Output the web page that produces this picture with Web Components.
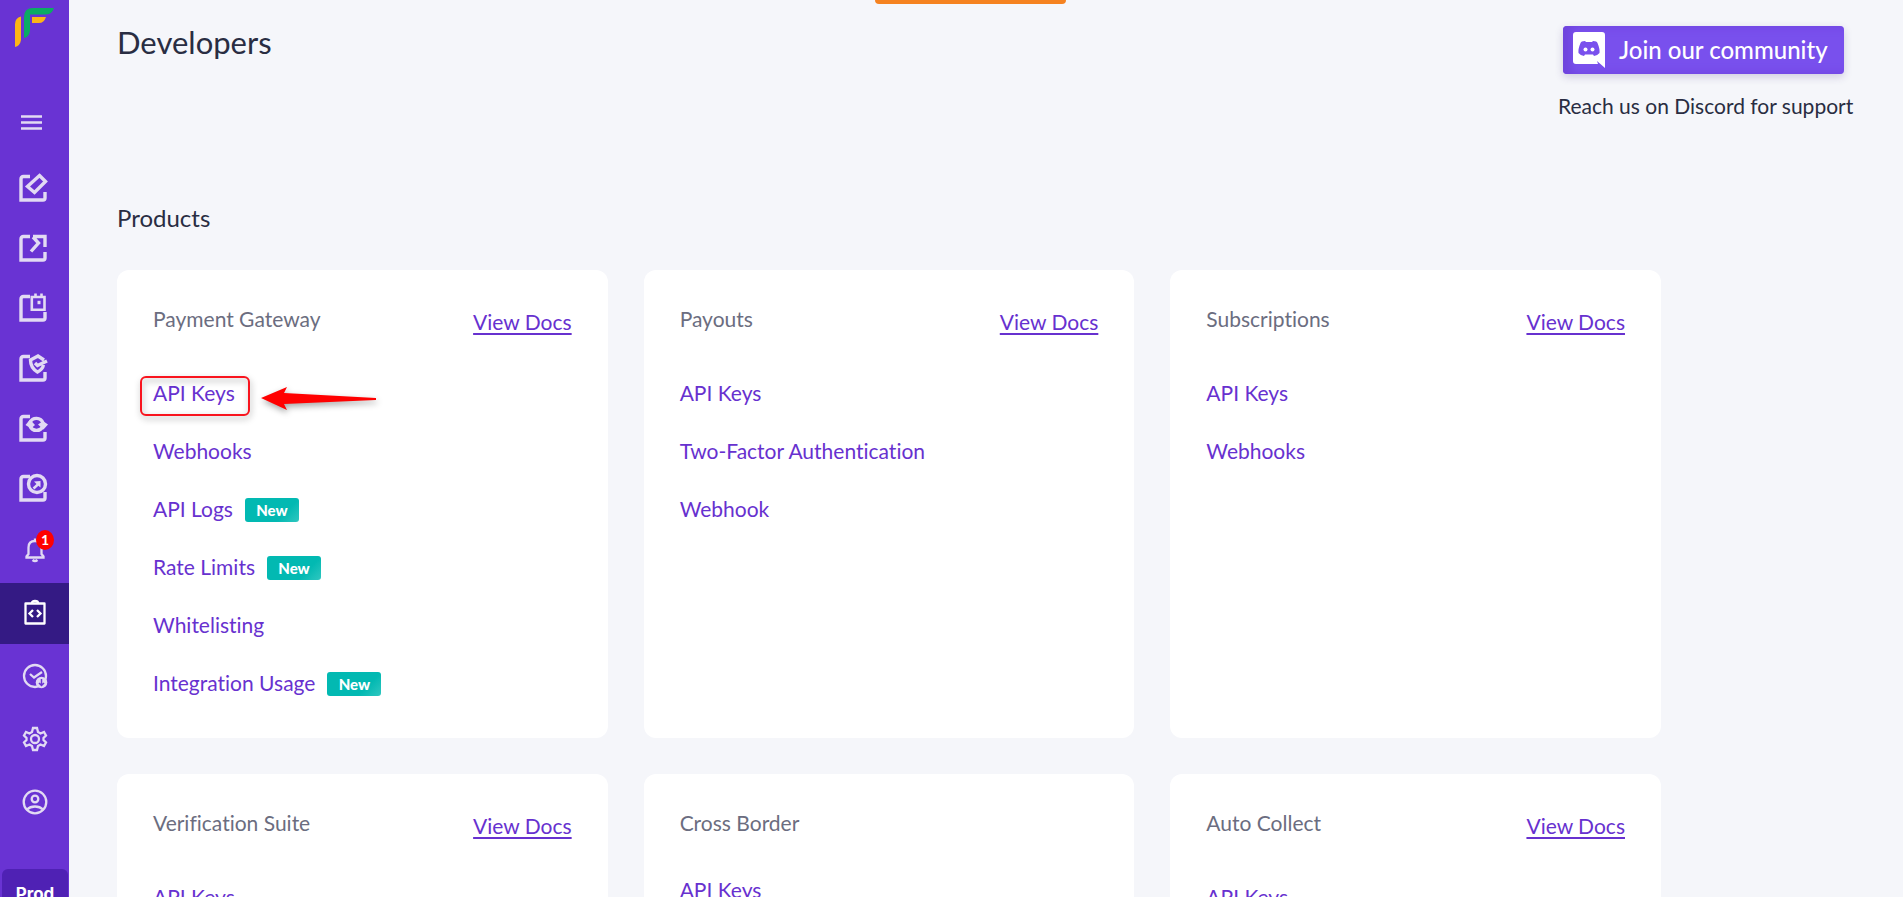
<!DOCTYPE html>
<html lang="en">
<head>
<meta charset="utf-8">
<meta name="viewport" content="width=device-width, initial-scale=1">
<title>Developers</title>
<style>
  html, body { margin: 0; height: 100%; }
  body { font-family: Lato, "Open Sans", sans-serif; font-variant-ligatures: none; color: #292d42; background: #f5f6fa; }
</style>
</head>
<body>
<dev-shell>
  <side-nav slot="nav"></side-nav>
  <page-header>
    Developers
    <community-cta slot="aside"></community-cta>
  </page-header>
  <product-grid heading="Products">
    <product-card name="Payment Gateway" docs>
      <product-link marked>API Keys</product-link>
      <product-link>Webhooks</product-link>
      <product-link fresh>API Logs</product-link>
      <product-link fresh>Rate Limits</product-link>
      <product-link>Whitelisting</product-link>
      <product-link fresh>Integration Usage</product-link>
    </product-card>
    <product-card name="Payouts" docs>
      <product-link>API Keys</product-link>
      <product-link>Two-Factor Authentication</product-link>
      <product-link>Webhook</product-link>
    </product-card>
    <product-card name="Subscriptions" docs>
      <product-link>API Keys</product-link>
      <product-link>Webhooks</product-link>
    </product-card>
    <product-card name="Verification Suite" docs>
      <product-link>API Keys</product-link>
    </product-card>
    <product-card name="Cross Border">
      <product-link>API Keys</product-link>
    </product-card>
    <product-card name="Auto Collect" docs>
      <product-link>API Keys</product-link>
    </product-card>
  </product-grid>
</dev-shell>

<script>
function define(name, render) {
  customElements.define(name, class extends HTMLElement {
    constructor() {
      super();
      this.attachShadow({ mode: "open" });
    }
    connectedCallback() {
      this.shadowRoot.innerHTML = render(this);
    }
  });
}

define("dev-shell", () => `
  <style>
    :host { display: flex; height: 100vh; overflow: hidden; }
    main {
      position: relative; flex: 1; min-width: 0; box-sizing: border-box;
      padding: 24px 48px; overflow: auto; scrollbar-width: none;
    }
    .strip {
      position: absolute; top: 0; left: calc(50% - 111px); width: 191px; height: 4px;
      background: #f58220; border-radius: 0 0 4px 4px;
    }
  </style>
  <slot name="nav"></slot>
  <main><div class="strip"></div><slot></slot></main>
`);

const frame = '<path d="M11 2.5H4.5Q2 2.5 2 5V26H24Q26 26 26 24V18"/>';
const icons = {
  forms: frame + '<path d="M20.5 1.5 26.5 7.5 15.5 18.5 8.5 12.5Z"/>',
  links: frame + '<path d="M14 2.5H26V13M12 17.5 19.5 9 14 3"/>',
  calendar: frame + '<path stroke-width="2.6" d="M12.800 3H25.500V15.700H12.800ZM16.500 -.5V3M22.500 -.5V3"/><path d="M18.500 8.500h3"/>',
  shield: frame + '<path d="M25 6 19 2 11.500 6Q11.500 14 18.500 18Q23.500 15.500 24.500 11M16 9 18.500 11.500 28 7"/>',
  sync: frame + '<path d="M11 8.500A7 7 0 0 1 24 9M24 12A7 7 0 0 1 11 12"/><path fill="currentColor" stroke="none" d="M6.500 11 11 5.500 16 11 12 14.500ZM19 10.500 24 7 29 10.500 24.500 15.500Z"/>',
  refund: frame + '<circle cx="18" cy="10" r="8.500"/><path stroke-width="2.500" d="M14.500 14.500 20.500 9"/><path d="M15 7.500 21.500 7V13.500L18.500 11Z" fill="currentColor" stroke="none"/>'
};
const outline = {
  alerts: '<path d="M5.500 21.500H22.500V20.500L20.500 18V11.500Q20.500 5 14 5Q7.500 5 7.500 11.500V18L5.500 20.500Z"/><path d="M14 2.500V5M11.500 24Q14 26 16.500 24"/>',
  developers: '<path stroke-linejoin="round" d="M4.500 4.500H23.500V24.500H4.500Z"/><path d="M11 4Q11 2 14 2Q17 2 17 4M12 11 8.500 14.500 12 18M16 11 19.500 14.500 16 18"/>',
  reports: '<circle cx="14" cy="14" r="11"/><path d="M9 12 13 15.500 21 10"/><circle cx="20.500" cy="20.500" r="5.800" fill="currentColor" stroke="none"/><path stroke="#6933d3" stroke-width="1.500" d="M20.500 17V23M18 21 20.500 23.500 23 21"/>',
  settings: '<circle cx="14" cy="14" r="4"/><path d="M12 3H16L17 7 19.500 8.500 23 7 25 10.500 22.500 13V15L25 17.500 23 21 19.500 19.500 17 21 16 25H12L11 21 8.500 19.500 5 21 3 17.500 5.500 15V13L3 10.500 5 7 8.500 8.500 11 7Z"/>',
  account: '<circle cx="14" cy="14" r="11.300"/><circle cx="14" cy="11" r="3.300"/><path d="M6 21.500Q9 18.500 14 18.500Q19 18.500 22 21.500"/>'
};
const svg = (body, weight) =>
  `<svg width="28" height="28" viewBox="0 0 28 28" fill="none" stroke="currentColor" stroke-width="${weight}" overflow="visible" aria-hidden="true">${body}</svg>`;

define("side-nav", () => `
  <style>
    :host { display: block; flex: none; width: 69px; overflow: hidden; background: #6933d3; color: #e2daf3; }
    .logo { display: block; height: 50px; }
    .logo svg { display: block; margin-left: 15px; }
    button.menu {
      display: block; margin: 60px 0 24px 18px; width: 27px; height: 24px; padding: 0;
      border: 0; background: none; color: inherit;
    }
    button.menu svg { display: block; margin: auto; }
    a { color: inherit; text-decoration: none; }
    .items a { position: relative; box-sizing: border-box; display: flex; align-items: center; }
    .products a { height: 60px; padding-left: 19px; }
    .tools { display: grid; gap: 2px; padding-top: 2px; }
    .tools a { height: 61px; padding-bottom: 2px; justify-content: center; }
    .tools a.active { background: #341a84; color: #fff; }
    .count {
      position: absolute; top: 10px; left: 36px; width: 18px; height: 20px; border-radius: 50%;
      background: #f00; color: #fff; font-size: 14px; font-weight: 700; line-height: 19px; text-align: center;
    }
    button.env {
      display: block; width: 66px; height: 50px; margin: 36px 0 0 2px; padding: 0; border: 0;
      border-radius: 6px; background: #4f21b4; color: #fff; font: 700 17px/51px Inter, sans-serif;
    }
  </style>
  <a class="logo" href="#" aria-label="Home">
    <svg width="40" height="50" viewBox="0 0 40 50" aria-hidden="true">
      <path fill="#fdb515" d="M0 47V24Q0 18 6 16.5V40Q5 46 0 47ZM17 17H31Q29 23 24 23H17Z"/>
      <path fill="#0bab64" d="M9 38V17Q9 8 18 8H39Q37 14.5 31 14.5H15V31Q14 37 9 38Z"/>
    </svg>
  </a>
  <button class="menu" aria-label="Menu">
    <svg width="21" height="16" viewBox="0 0 21 16" fill="none" stroke="currentColor" stroke-width="2.4" aria-hidden="true"><path d="M0 2.5H21M0 8.500H21M0 14.500H21"/></svg>
  </button>
  <nav class="items products">
    ${Object.entries(icons).map(([k, v]) => `<a href="#" aria-label="${k}">${svg(v, 3.4)}</a>`).join("")}
  </nav>
  <nav class="items tools">
    ${Object.entries(outline).map(([k, v]) => `<a href="#" aria-label="${k}" class="${k === "developers" ? "active" : ""}">${svg(v, 2.3)}${k === "alerts" ? '<span class="count">1</span>' : ""}</a>`).join("")}
  </nav>
  <button class="env">Prod</button>
`);

define("page-header", () => `
  <style>
    :host { display: flex; justify-content: space-between; height: 176px; }
    h1 { margin: 0; font-size: 31px; line-height: 36px; font-weight: 400; }
  </style>
  <h1><slot></slot></h1>
  <slot name="aside"></slot>
`);

define("community-cta", () => `
  <style>
    :host { display: block; width: 297px; padding-top: 2px; }
    button {
      display: flex; align-items: center; gap: 14px; width: 281px; height: 48px; margin-left: 5px; padding: 0 0 0 10px;
      border: 0; border-radius: 4px; background: #7950ed; color: #fff; font: 500 24px/32px Lato, sans-serif;
      white-space: nowrap;
      box-shadow: inset 8px 0 10px #6f44dd, 0 3px 8px rgba(60, 40, 120, .2);
    }
    svg { flex: none; }
    p { margin: 18px 0 0; font-size: 21px; line-height: 28px; white-space: nowrap; }
  </style>
  <button>
    <svg width="32" height="36" viewBox="0 0 32 36" aria-hidden="true">
      <path fill="#fff" d="M3 0H29Q32 0 32 3V36L24 29 25 32H3Q0 32 0 29V3Q0 0 3 0Z"/>
      <path fill="#7950ed" d="M12 9Q8 9 7.5 11Q5 17 5.5 21Q8 24 11 24L12 22.5H20L21 24Q24 24 26.5 21Q27 17 24.5 11Q24 9 20 9L19 10H13Z"/>
      <circle cx="12.5" cy="17.5" r="2" fill="#fff"/><circle cx="19.5" cy="17.5" r="2" fill="#fff"/>
    </svg>
    Join our community
  </button>
  <p>Reach us on Discord for support</p>
`);

define("product-grid", el => `
  <style>
    :host { display: block; }
    h2 { margin: 0 0 36px; padding-top: 2px; font-size: 24px; line-height: 32px; font-weight: 400; }
    .grid { display: grid; grid-template-columns: repeat(3, minmax(0, 1fr)); gap: 36px; margin-right: 194px; }
  </style>
  <h2>${el.getAttribute("heading")}</h2>
  <div class="grid"><slot></slot></div>
`);

define("product-card", el => `
  <style>
    :host { display: block; padding: 36px 36px 37px; border-radius: 12px; background: #fff; }
    header { display: flex; justify-content: space-between; align-items: flex-start; min-height: 28px; margin-bottom: 36px; }
    h3 { margin: 0; font-size: 21px; line-height: 26px; font-weight: 400; color: #6b6d80; }
    a { padding: 3px 0 6px; font-size: 21px; line-height: 26px; color: #6731cf; text-underline-offset: 3px; text-decoration-thickness: 2px; text-decoration-skip-ink: none; }
    .links { display: grid; gap: 24px; }
  </style>
  <header>
    <h3>${el.getAttribute("name")}</h3>
    ${el.hasAttribute("docs") ? '<a href="#">View Docs</a>' : ""}
  </header>
  <div class="links"><slot></slot></div>
`);

define("product-link", el => `
  <style>
    :host { position: relative; display: flex; align-items: center; gap: 12px; height: 34px; font-size: 21px; line-height: 28px; }
    a { padding-bottom: 2px; color: #6731cf; text-decoration: none; }
    .badge {
      width: 54px; height: 24px; border-radius: 3px; text-align: center;
      background: linear-gradient(135deg, #02b9b2 70%, #30c7c0); color: #fff; font-size: 15px; line-height: 24px; font-weight: 900;
    }
    .mark { position: absolute; top: -2px; left: -15px; overflow: visible; pointer-events: none; filter: drop-shadow(1px 3px 3px rgba(0, 0, 0, .35)); }
  </style>
  <a href="#"><slot></slot></a>
  ${el.hasAttribute("fresh") ? '<span class="badge">New</span>' : ""}
  ${el.hasAttribute("marked") ? `<svg class="mark" width="240" height="44" viewBox="0 0 240 44" aria-hidden="true">
    <rect x="3" y="2" width="108" height="38" rx="5" fill="none" stroke="#f9141e" stroke-width="2"/>
    <path fill="#f00" d="M123 23 149 12 146 18 238 23V25L146 29 149 35Z"/>
  </svg>` : ""}
`);
</script>
</body>
</html>
